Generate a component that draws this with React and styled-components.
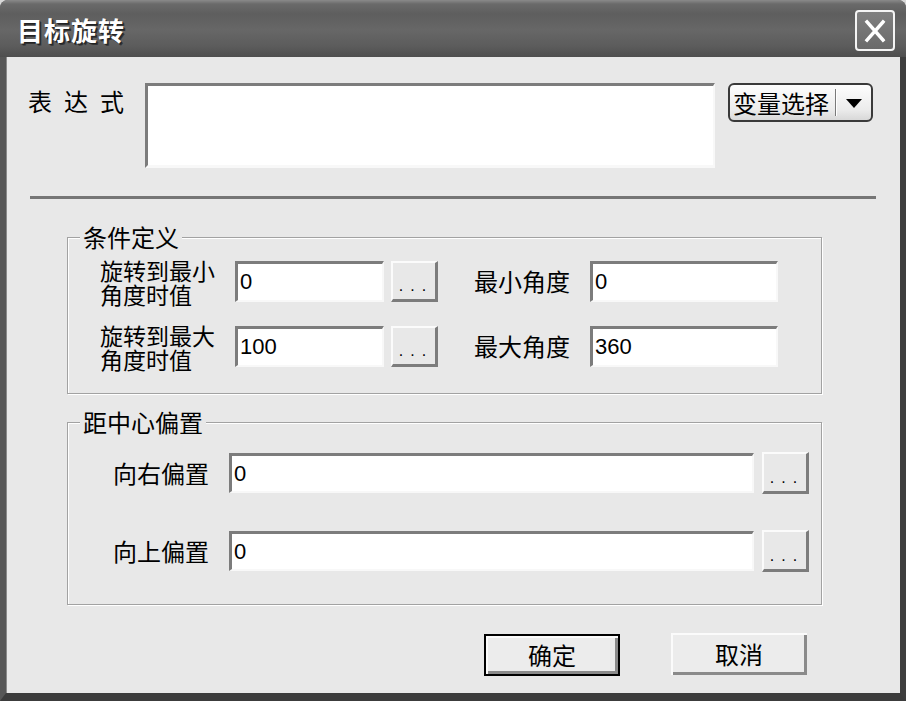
import React from 'react';
import styled, { createGlobalStyle } from 'styled-components';

const GlobalStyle = createGlobalStyle`
    html, body {
        margin: 0;
        padding: 0;
        background: #d8d8d8;
    }
    * {
        box-sizing: border-box;
    }
`;

const CJK = `"Noto Sans CJK SC", "Noto Sans", sans-serif`;

const Dialog = () => {
    return (
        <Window>
            <TitleBar>
                <Title>目标旋转</Title>
                <CloseButton aria-label="close">
                    <svg width="22" height="24" viewBox="0 0 22 24">
                        <path d="M3 3 L19 21 M19 3 L3 21" stroke="#fff" strokeWidth="3.4" strokeLinecap="square" />
                    </svg>
                </CloseButton>
            </TitleBar>

            <Body>
                <ExprRow>
                    <ExprLabel>表达式</ExprLabel>
                    <ExprArea />
                    <VarButton>
                        <span>变量选择</span>
                        <VarDivider />
                        <svg width="16" height="10" viewBox="0 0 16 10">
                            <polygon points="0,0 16,0 8,9" fill="#000" />
                        </svg>
                    </VarButton>
                </ExprRow>

                <Separator />

                <Group $top={25}>
                    <Legend>条件定义</Legend>
                    <GroupInner $pt={7} $pb={23} $pl={32} $gap={17}>
                        <Row>
                            <RotLabel>
                                <span>旋转到最小</span>
                                <span>角度时值</span>
                            </RotLabel>
                            <Field $w={149} $h={41} defaultValue="0" />
                            <DotButton $h={41}>...</DotButton>
                            <AngleLabel>最小角度</AngleLabel>
                            <Field $w={188} $h={41} defaultValue="0" />
                        </Row>
                        <Row>
                            <RotLabel>
                                <span>旋转到最大</span>
                                <span>角度时值</span>
                            </RotLabel>
                            <Field $w={149} $h={41} defaultValue="100" />
                            <DotButton $h={41}>...</DotButton>
                            <AngleLabel>最大角度</AngleLabel>
                            <Field $w={188} $h={41} defaultValue="360" />
                        </Row>
                    </GroupInner>
                </Group>

                <Group $top={15}>
                    <Legend>距中心偏置</Legend>
                    <GroupInner $pt={17} $pb={32} $pl={45} $gap={36}>
                        <Row>
                            <OffsetLabel>向右偏置</OffsetLabel>
                            <Field $w={525} $h={40} defaultValue="0" />
                            <DotButton $h={42} $ml={8}>...</DotButton>
                        </Row>
                        <Row>
                            <OffsetLabel>向上偏置</OffsetLabel>
                            <Field $w={525} $h={40} defaultValue="0" />
                            <DotButton $h={42} $ml={8}>...</DotButton>
                        </Row>
                    </GroupInner>
                </Group>

                <Footer>
                    <PushButton $default>确定</PushButton>
                    <PushButton>取消</PushButton>
                </Footer>
            </Body>
        </Window>
    );
};

export default function App() {
    return (
        <>
            <GlobalStyle />
            <Dialog />
        </>
    );
}

const Window = styled.div`
    width: 906px;
    height: 701px;
    display: flex;
    flex-direction: column;
    border-radius: 8px 8px 0 0;
    overflow: hidden;
    background: #5c5c5c;
    font-family: ${CJK};
`;

const TitleBar = styled.div`
    height: 57px;
    flex-shrink: 0;
    display: flex;
    align-items: center;
    justify-content: space-between;
    padding: 0 11px 0 17px;
    background: linear-gradient(
        to bottom,
        #8a8a8a 0px,
        #6a6a6a 4px,
        #5e5e5e 14px,
        #676767 30px,
        #5c5c5c 46px,
        #4e4e4e 57px
    );
`;

const Title = styled.div`
    color: #fff;
    font-size: 26px;
    font-weight: 700;
    line-height: 30px;
    letter-spacing: 1px;
    text-shadow: 1px 1px 0 #222, 2px 2px 0 #333;
    margin-top: 2px;
`;

const CloseButton = styled.button`
    width: 40px;
    height: 41px;
    padding: 0;
    margin-top: 4px;
    display: flex;
    align-items: center;
    justify-content: center;
    border: 2px solid #f4f4f4;
    border-radius: 4px;
    background: linear-gradient(to bottom, #808080, #6a6a6a);
`;

const Body = styled.div`
    flex: 1;
    display: flex;
    flex-direction: column;
    background: #e8e8e8;
    border-left: 6px solid #575757;
    border-right: 6px solid #3e3e3e;
    border-bottom: 8px solid #3c3c3c;
    box-shadow: inset 1px 0 0 #8a8a8a;
    padding-top: 26px;
`;

const ExprRow = styled.div`
    display: flex;
    align-items: flex-start;
    padding-left: 22px;
`;

const ExprLabel = styled.div`
    width: 117px;
    font-size: 24px;
    line-height: 26px;
    letter-spacing: 12px;
    color: #000;
    padding-top: 5px;
`;

const ExprArea = styled.div`
    width: 570px;
    height: 85px;
    background: #fff;
    border-top: 3px solid #7c7c7c;
    border-left: 3px solid #7c7c7c;
    border-right: 2px solid #f8f8f8;
    border-bottom: 3px solid #f8f8f8;
`;

const VarButton = styled.button`
    margin-left: 13px;
    width: 145px;
    height: 39px;
    display: flex;
    align-items: center;
    padding: 0 0 0 3px;
    border: 2px solid #3a3a3a;
    border-radius: 6px;
    background: linear-gradient(to bottom, #fdfdfd, #ececec 70%, #d8d8d8);
    font-family: ${CJK};
    font-size: 24px;
    line-height: 26px;
    color: #000;

    svg {
        margin-left: 9px;
        margin-top: 2px;
    }
`;

const VarDivider = styled.span`
    width: 2px;
    height: 27px;
    margin-left: 6px;
    border-left: 1px solid #7a7a7a;
    border-right: 1px solid #fff;
`;

const Separator = styled.div`
    height: 3px;
    margin: 28px 24px 0 24px;
    background: #767676;
`;

const Group = styled.fieldset`
    margin: ${({ $top }) => $top}px 0 0 61px;
    padding: 0;
    width: 755px;
    min-inline-size: 0;
    border: 1px solid #a2a2a2;
    box-shadow: inset 1px 1px 0 #fff, 1px 1px 0 #fff;
`;

const Legend = styled.legend`
    margin-left: 12px;
    padding: 0 3px;
    font-size: 24px;
    line-height: 26px;
    color: #000;
    background: #e8e8e8;
`;

const GroupInner = styled.div`
    display: flex;
    flex-direction: column;
    gap: ${({ $gap }) => $gap}px;
    padding: ${({ $pt, $pb, $pl }) => `${$pt}px 0 ${$pb}px ${$pl}px`};
`;

const Row = styled.div`
    display: flex;
    align-items: center;
`;

const RotLabel = styled.div`
    width: 135px;
    height: 48px;
    display: flex;
    flex-direction: column;
    font-size: 23px;
    line-height: 24px;
    color: #000;
    padding-top: 1px;

    span {
        display: block;
        height: 24px;
        white-space: nowrap;
    }
`;

const AngleLabel = styled.div`
    width: 116px;
    margin-left: 36px;
    font-size: 24px;
    line-height: 26px;
    color: #000;
`;

const OffsetLabel = styled.div`
    width: 116px;
    font-size: 24px;
    line-height: 26px;
    color: #000;
`;

const Field = styled.input`
    width: ${({ $w }) => $w}px;
    height: ${({ $h }) => $h}px;
    margin: 0;
    padding: 0 0 0 2px;
    background: #fff;
    border-top: 3px solid #7c7c7c;
    border-left: 3px solid #7c7c7c;
    border-right: 2px solid #f8f8f8;
    border-bottom: 2px solid #f8f8f8;
    font-family: "Liberation Sans", Arial, sans-serif;
    font-size: 22px;
    color: #000;
    outline: none;
`;

const DotButton = styled.button`
    width: 47px;
    height: ${({ $h }) => $h}px;
    margin-left: ${({ $ml = 7 }) => $ml}px;
    padding: 10px 0 0 4px;
    background: #e8e8e8;
    border-top: 2px solid #fbfbfb;
    border-left: 2px solid #fbfbfb;
    border-right: 3px solid #7c7c7c;
    border-bottom: 3px solid #7c7c7c;
    font-family: "Liberation Sans", Arial, sans-serif;
    font-size: 16px;
    letter-spacing: 7px;
    color: #000;
`;

const Footer = styled.div`
    display: flex;
    justify-content: flex-end;
    gap: 51px;
    margin-top: 28px;
    padding-right: 93px;
`;

const PushButton = styled.button`
    width: 136px;
    height: 42px;
    padding: 0;
    background: #ececec;
    border: ${({ $default }) => ($default ? '2px solid #000' : 'none')};
    box-shadow: inset 2px 2px 0 #fbfbfb, inset -3px -3px 0 #8a8a8a;
    font-family: ${CJK};
    font-size: 24px;
    line-height: 26px;
    color: #000;
    margin-top: ${({ $default }) => ($default ? '1px' : '0')};
`;
